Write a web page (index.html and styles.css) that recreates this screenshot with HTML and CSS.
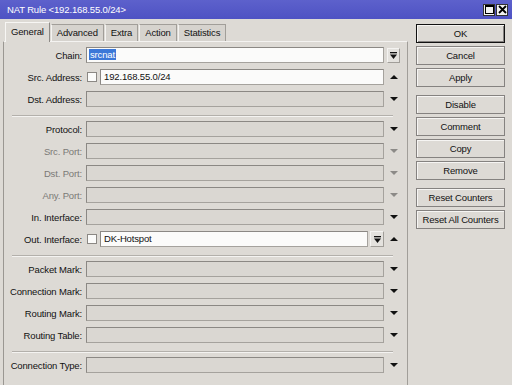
FILE: index.html
```html
<!DOCTYPE html>
<html lang="en">
<head>
    <meta charset="UTF-8">
    <title>NAT Rule</title>
    <link rel="stylesheet" href="styles.css">
</head>
<body>
<div class="window">
    <div class="titlebar">
        <span class="title">NAT Rule &lt;192.168.55.0/24&gt;</span>
        <span class="tb-btns">
            <span class="tb-btn"><svg width="9" height="9" viewBox="0 0 9 9"><rect x="0.5" y="0.5" width="8" height="8" fill="none" stroke="#000"/><rect x="0" y="0" width="9" height="2" fill="#000"/></svg></span>
            <span class="tb-btn"><svg width="9" height="9" viewBox="0 0 9 9"><path d="M1 1 L8 8 M8 1 L1 8" stroke="#000" stroke-width="1.8"/></svg></span>
        </span>
    </div>

    <div class="main">
        <div class="editor">
            <div class="tabs">
                <div class="tab active">General</div>
                <div class="tab">Advanced</div>
                <div class="tab">Extra</div>
                <div class="tab">Action</div>
                <div class="tab">Statistics</div>
            </div>

            <div class="panel">
                <!-- адреса -->
                <div class="group">
                    <div class="row">
                        <span class="lbl">Chain:</span>
                        <div class="field"><div class="box white"><span class="selected">srcnat</span></div></div>
                        <div class="trail"><span class="combo"><svg width="7" height="7" viewBox="0 0 7 7"><rect x="0" y="0" width="7" height="1.3" fill="#111"/><path d="M0 2.5 H7 L3.5 7 Z" fill="#111"/></svg></span></div>
                    </div>
                    <div class="row">
                        <span class="lbl">Src. Address:</span>
                        <div class="field"><span class="check"></span><div class="box white">192.168.55.0/24</div></div>
                        <div class="trail"><span class="tri up"></span></div>
                    </div>
                    <div class="row">
                        <span class="lbl">Dst. Address:</span>
                        <div class="field"><div class="box"></div></div>
                        <div class="trail"><span class="tri"></span></div>
                    </div>
                </div>

                <div class="sep"></div>

                <!-- протокол и интерфейсы -->
                <div class="group">
                    <div class="row">
                        <span class="lbl">Protocol:</span>
                        <div class="field"><div class="box"></div></div>
                        <div class="trail"><span class="tri"></span></div>
                    </div>
                    <div class="row off">
                        <span class="lbl">Src. Port:</span>
                        <div class="field"><div class="box"></div></div>
                        <div class="trail"><span class="tri"></span></div>
                    </div>
                    <div class="row off">
                        <span class="lbl">Dst. Port:</span>
                        <div class="field"><div class="box"></div></div>
                        <div class="trail"><span class="tri"></span></div>
                    </div>
                    <div class="row off">
                        <span class="lbl">Any. Port:</span>
                        <div class="field"><div class="box"></div></div>
                        <div class="trail"><span class="tri"></span></div>
                    </div>
                    <div class="row">
                        <span class="lbl">In. Interface:</span>
                        <div class="field"><div class="box"></div></div>
                        <div class="trail"><span class="tri"></span></div>
                    </div>
                    <div class="row">
                        <span class="lbl">Out. Interface:</span>
                        <div class="field">
                            <span class="check"></span>
                            <div class="box white">DK-Hotspot</div>
                            <span class="combo wide"><svg width="7" height="7" viewBox="0 0 7 7"><rect x="0" y="0" width="7" height="1.3" fill="#111"/><path d="M0 2.5 H7 L3.5 7 Z" fill="#111"/></svg></span>
                        </div>
                        <div class="trail"><span class="tri up"></span></div>
                    </div>
                </div>

                <div class="sep"></div>

                <!-- метки -->
                <div class="group">
                    <div class="row">
                        <span class="lbl">Packet Mark:</span>
                        <div class="field"><div class="box"></div></div>
                        <div class="trail"><span class="tri"></span></div>
                    </div>
                    <div class="row">
                        <span class="lbl">Connection Mark:</span>
                        <div class="field"><div class="box"></div></div>
                        <div class="trail"><span class="tri"></span></div>
                    </div>
                    <div class="row">
                        <span class="lbl">Routing Mark:</span>
                        <div class="field"><div class="box"></div></div>
                        <div class="trail"><span class="tri"></span></div>
                    </div>
                    <div class="row">
                        <span class="lbl">Routing Table:</span>
                        <div class="field"><div class="box"></div></div>
                        <div class="trail"><span class="tri"></span></div>
                    </div>
                </div>

                <div class="sep"></div>

                <div class="group">
                    <div class="row">
                        <span class="lbl">Connection Type:</span>
                        <div class="field"><div class="box"></div></div>
                        <div class="trail"><span class="tri"></span></div>
                    </div>
                </div>
            </div>
        </div>

        <div class="side">
            <div class="btn-group">
                <button class="btn default">OK</button>
                <button class="btn">Cancel</button>
                <button class="btn">Apply</button>
            </div>
            <div class="btn-group">
                <button class="btn">Disable</button>
                <button class="btn">Comment</button>
                <button class="btn">Copy</button>
                <button class="btn">Remove</button>
            </div>
            <div class="btn-group">
                <button class="btn">Reset Counters</button>
                <button class="btn">Reset All Counters</button>
            </div>
        </div>
    </div>
</div>
</body>
</html>
```

FILE: styles.css
```css
body, html {
    margin: 0;
    padding: 0;
    width: 100%;
    height: 100%;
    overflow: hidden;
    background-color: #dddad5;
    font-family: "Liberation Sans", Arial, sans-serif;
    font-size: 9.5px;
    letter-spacing: -0.15px;
    color: #111;
}

.window {
    height: 385px;
}

.titlebar {
    height: 19px;
    display: flex;
    align-items: center;
    justify-content: space-between;
    padding: 0 4px 0 7px;
    background: linear-gradient(#5d61cc, #4e52c3);
    color: white;
    font-size: 9.5px;
}

.tb-btns {
    display: flex;
    gap: 1px;
}

.tb-btn {
    width: 12px;
    height: 12px;
    box-sizing: border-box;
    background-color: #f2f2f2;
    border: 1px solid #333;
    display: flex;
    align-items: center;
    justify-content: center;
}

.main {
    display: flex;
}

.editor {
    width: 405px;
    padding: 3px 0 0 3px;
}

/* Вкладки */
.tabs {
    display: flex;
    align-items: flex-end;
    height: 19px;
    padding-left: 2px;
}

.tab {
    height: 17px;
    box-sizing: border-box;
    padding: 0 5px;
    line-height: 15px;
    background-color: #d6d3ce;
    border: 1px solid #a19e99;
    border-bottom: none;
    border-left-color: #f4f3f1;
    margin-right: 1px;
}

.tab.active {
    height: 20px;
    margin-bottom: -1px;
    position: relative;
    background-color: #dddad5;
    border-color: #f7f6f4 #8e8b87 transparent #f7f6f4;
    line-height: 18px;
}

.panel {
    border: 1px solid #a19e99;
    border-top-color: #f4f3f1;
    border-left-color: #9a9792;
    padding: 5px 7px 30px 0;
}

.group {
    display: flex;
    flex-direction: column;
    gap: 6px;
}

.row {
    display: flex;
    align-items: center;
    height: 16px;
}

.lbl {
    width: 78px;
    margin-right: 4px;
    text-align: right;
    white-space: nowrap;
}

.row.off .lbl {
    color: #7b7975;
}

.field {
    width: 298px;
    height: 16px;
    display: flex;
    align-items: center;
}

.box {
    flex: 1;
    height: 16px;
    box-sizing: border-box;
    border: 1px solid #a5a29d;
    border-top-color: #8b8884;
    border-left-color: #8b8884;
    background-color: #dad7d2;
    padding: 0 3px;
    line-height: 14px;
    white-space: nowrap;
    overflow: hidden;
}

.box.white {
    background-color: #fbfbfa;
}

.selected {
    background-color: #3b78d8;
    color: white;
    padding: 0 1px;
    margin-left: -1px;
}

.check {
    width: 10px;
    height: 10px;
    box-sizing: border-box;
    margin: 0 3px 0 1px;
    background-color: #fbfbfa;
    border: 1px solid #8b8884;
}

.trail {
    width: 14px;
    margin-left: 2px;
    display: flex;
    justify-content: center;
    align-items: center;
}

.combo {
    width: 13px;
    height: 15px;
    box-sizing: border-box;
    border: 1px solid #a19e99;
    border-top-color: #f4f3f1;
    border-left-color: #f4f3f1;
    background-color: #e4e2de;
    display: flex;
    align-items: center;
    justify-content: center;
    margin-left: 1px;
}

.combo.wide {
    width: 14px;
    height: 16px;
    margin-left: 2px;
}

.tri {
    width: 0;
    height: 0;
    border-left: 4px solid transparent;
    border-right: 4px solid transparent;
    border-top: 4px solid #111;
    margin-left: 2px;
}

.tri.up {
    border-top: none;
    border-bottom: 4px solid #111;
}

.row.off .tri {
    border-top-color: #8c8a87;
}

.sep {
    height: 0;
    border-top: 1px solid #b3b0ab;
    border-bottom: 1px solid #f4f3f1;
    margin: 8px 7px 4px 8px;
}

/* Кнопки справа */
.side {
    width: 89px;
    margin-left: 8px;
    padding-top: 5px;
    display: flex;
    flex-direction: column;
    gap: 8px;
}

.btn-group {
    display: flex;
    flex-direction: column;
    gap: 3px;
}

.btn {
    height: 19px;
    padding: 0;
    margin: 0;
    font-family: inherit;
    font-size: 9.5px;
    letter-spacing: -0.15px;
    color: #111;
    background-color: #dddad5;
    border: 1px solid #858280;
    box-shadow: inset 1px 1px 0 #f6f5f3;
}

.btn.default {
    border-color: #111;
    box-shadow: inset 1px 1px 0 #f6f5f3, inset -1px -1px 0 #858280;
}
```
